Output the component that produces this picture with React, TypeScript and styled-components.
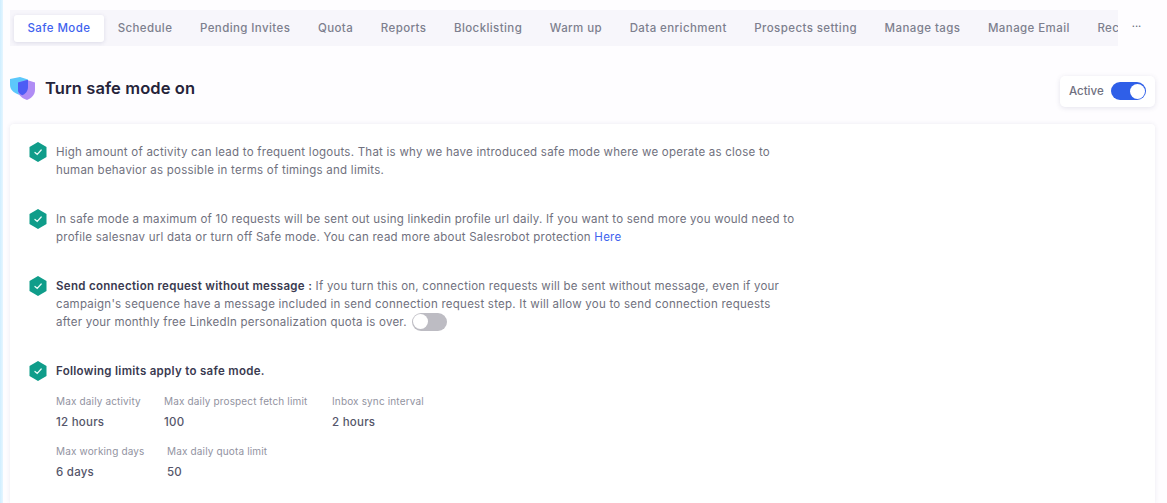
import styled, { createGlobalStyle } from "styled-components";

const Global = createGlobalStyle`
  html, body {
    margin: 0;
    padding: 0;
    background: #fff;
    font-family: "Inter", "Open Sans", sans-serif;
    overflow: hidden;
  }
`;

const Page = styled.div`
  width: 1167px;
  height: 503px;
  overflow: hidden;
  display: flex;
  background: #fefdff;
`;

const Strip = styled.div`
  width: 3px;
  flex: none;
  background: linear-gradient(to right, #cfeeff, #e6f6ff);
`;

const Main = styled.main`
  flex: 1;
  min-width: 0;
  padding: 10px 12px 0 7px;
  display: flex;
  flex-direction: column;
`;

const TabRow = styled.div`
  display: flex;
  align-items: center;
`;

const Tabs = styled.nav`
  width: 1108px;
  height: 36px;
  flex: none;
  padding: 4px;
  box-sizing: border-box;
  display: flex;
  align-items: center;
  overflow: hidden;
  background: #f7f6fb;
`;

const Tab = styled.div<{ $active?: boolean }>`
  flex: none;
  height: 27px;
  padding: 0 ${({ $active }) => ($active ? "13.5px" : "13.8px")};
  display: flex;
  align-items: center;
  font-size: 11.5px;
  font-weight: 500;
  letter-spacing: 0.41px;
  border-radius: 3px;
  color: ${({ $active }) => ($active ? "#3f63ee" : "#7d7f8e")};
  background: ${({ $active }) => ($active ? "#fff" : "transparent")};
  box-shadow: ${({ $active }) => ($active ? "0 1px 4px rgba(60,60,110,.14)" : "none")};
`;

const More = styled.div`
  flex: 1;
  text-align: center;
  font-size: 11px;
  line-height: 10px;
  margin-top: -4px;
  color: #666a78;
`;

const Header = styled.header`
  height: 78px;
  display: flex;
  align-items: center;
  justify-content: space-between;
`;

const TitleGroup = styled.div`
  display: flex;
  align-items: center;
  gap: 9px;
  margin-top: 6px;
`;

const Title = styled.h1`
  margin: 0;
  font-size: 16.5px;
  font-weight: 600;
  letter-spacing: 0.1px;
  color: #25233a;
`;

const ActiveBox = styled.div`
  width: 95px;
  height: 31px;
  box-sizing: border-box;
  padding: 0 9px;
  display: flex;
  align-items: center;
  justify-content: space-between;
  border-radius: 5px;
  background: #fff;
  box-shadow: 0 1px 5px rgba(70,70,120,.14);
  margin-top: 12px;
  font-size: 11.5px;
  font-weight: 500;
  color: #6f7080;
`;

const Switch = styled.span<{ $on?: boolean }>`
  width: 35px;
  height: 18px;
  flex: none;
  box-sizing: border-box;
  padding: 1.5px;
  display: flex;
  justify-content: ${({ $on }) => ($on ? "flex-end" : "flex-start")};
  border-radius: 9px;
  background: ${({ $on }) => ($on ? "#2f5fe8" : "#bdbcc3")};

  &::after {
    content: "";
    width: 15px;
    height: 15px;
    border-radius: 50%;
    background: #fff;
  }
`;

const InlineSwitch = styled(Switch)`
  display: inline-flex;
  vertical-align: middle;
  margin: -2px 0 0 5px;
`;

const Card = styled.section`
  flex: 1;
  padding: 19px 19px 0;
  border-radius: 4px 4px 0 0;
  background: #fff;
  box-shadow: 0 0 4px rgba(70,70,120,.1);
  display: flex;
  flex-direction: column;
  gap: 31px;
`;

const Item = styled.div`
  display: flex;
  gap: 9px;
`;

const Hex = styled.svg`
  width: 18px;
  height: 20px;
  flex: none;
  margin-top: -1px;
`;

const Body = styled.div`
  width: 760px;
  font-size: 11.5px;
  line-height: 18px;
  letter-spacing: 0.24px;
  color: #70717e;
`;

const Strong = styled.strong`
  font-weight: 600;
  letter-spacing: 0.3px;
  color: #3a3a50;
`;

const Link = styled.a`
  color: #3f63ee;
`;

const Limits = styled.div`
  display: flex;
  flex-direction: column;
  gap: 15px;
  margin-top: 15px;
`;

const LimitRow = styled.div`
  display: flex;
  gap: 24px;
`;

const Limit = styled.div<{ $width: number }>`
  width: ${({ $width }) => $width}px;
  display: flex;
  flex-direction: column;
  gap: 6px;
`;

const LimitLabel = styled.span`
  font-size: 10px;
  line-height: 13px;
  letter-spacing: 0.15px;
  white-space: nowrap;
  color: #92939f;
`;

const LimitValue = styled.span`
  font-size: 11.5px;
  line-height: 16px;
  font-weight: 500;
  color: #55566a;
`;

const tabs = [
  "Schedule",
  "Pending Invites",
  "Quota",
  "Reports",
  "Blocklisting",
  "Warm up",
  "Data enrichment",
  "Prospects setting",
  "Manage tags",
  "Manage Email",
  "Rec",
];

function CheckHex() {
  return (
    <Hex viewBox="0 0 18 20">
      <path d="M9 0 L17.5 5 V15 L9 20 L0.5 15 V5 Z" fill="#0f9d8a" />
      <path d="M6 10.4 L8.2 12.4 L12.2 8" fill="none" stroke="#e8fbf7" strokeWidth="1.3" strokeLinecap="round" />
    </Hex>
  );
}

function ShieldIcon() {
  return (
    <svg width="26" height="26" viewBox="0 0 26 26">
      <path d="M0 4 L10 2 L18 4.5 V12 C18 16.5 14 19.5 11 20.5 C6 19 0 16 0 10 Z" fill="#5cc8fb" />
      <path d="M8 7.5 L17 5 L25 7.5 V15 C25 20 21 23.5 17 25 C12 23.5 8 20 8 15 Z" fill="#b08cf5" />
      <path d="M8 7.5 L17 5 L18 5 V12 C18 16.5 15 19.2 12.2 20.2 C9.5 19 8 17.5 8 15 Z" fill="#4c5cf5" />
    </svg>
  );
}

export default function App() {
  return (
    <>
      <Global />
      <Page>
        <Strip />
        <Main>
          <TabRow>
            <Tabs>
              <Tab $active>Safe Mode</Tab>
              {tabs.map((t) => (
                <Tab key={t}>{t}</Tab>
              ))}
            </Tabs>
            <More>···</More>
          </TabRow>
          <Header>
            <TitleGroup>
              <ShieldIcon />
              <Title>Turn safe mode on</Title>
            </TitleGroup>
            <ActiveBox>
              Active
              <Switch $on />
            </ActiveBox>
          </Header>
          <Card>
            <Item>
              <CheckHex />
              <Body>
                High amount of activity can lead to frequent logouts. That is why we have introduced safe mode where we operate as close to
                <br />
                human behavior as possible in terms of timings and limits.
              </Body>
            </Item>
            <Item>
              <CheckHex />
              <Body>
                In safe mode a maximum of 10 requests will be sent out using linkedin profile url daily. If you want to send more you would need to
                <br />
                profile salesnav url data or turn off Safe mode. You can read more about Salesrobot protection <Link>Here</Link>
              </Body>
            </Item>
            <Item>
              <CheckHex />
              <Body>
                <Strong>Send connection request without message :</Strong> If you turn this on, connection requests will be sent without message, even if your
                <br />
                campaign's sequence have a message included in send connection request step. It will allow you to send connection requests
                <br />
                after your monthly free LinkedIn personalization quota is over.
                <InlineSwitch />
              </Body>
            </Item>
            <Item>
              <CheckHex />
              <Body>
                <Strong>Following limits apply to safe mode.</Strong>
                <Limits>
                  <LimitRow>
                    <Limit $width={84}>
                      <LimitLabel>Max daily activity</LimitLabel>
                      <LimitValue>12 hours</LimitValue>
                    </Limit>
                    <Limit $width={144}>
                      <LimitLabel>Max daily prospect fetch limit</LimitLabel>
                      <LimitValue>100</LimitValue>
                    </Limit>
                    <Limit $width={100}>
                      <LimitLabel>Inbox sync interval</LimitLabel>
                      <LimitValue>2 hours</LimitValue>
                    </Limit>
                  </LimitRow>
                  <LimitRow>
                    <Limit $width={87}>
                      <LimitLabel>Max working days</LimitLabel>
                      <LimitValue>6 days</LimitValue>
                    </Limit>
                    <Limit $width={110}>
                      <LimitLabel>Max daily quota limit</LimitLabel>
                      <LimitValue>50</LimitValue>
                    </Limit>
                  </LimitRow>
                </Limits>
              </Body>
            </Item>
          </Card>
        </Main>
      </Page>
    </>
  );
}
